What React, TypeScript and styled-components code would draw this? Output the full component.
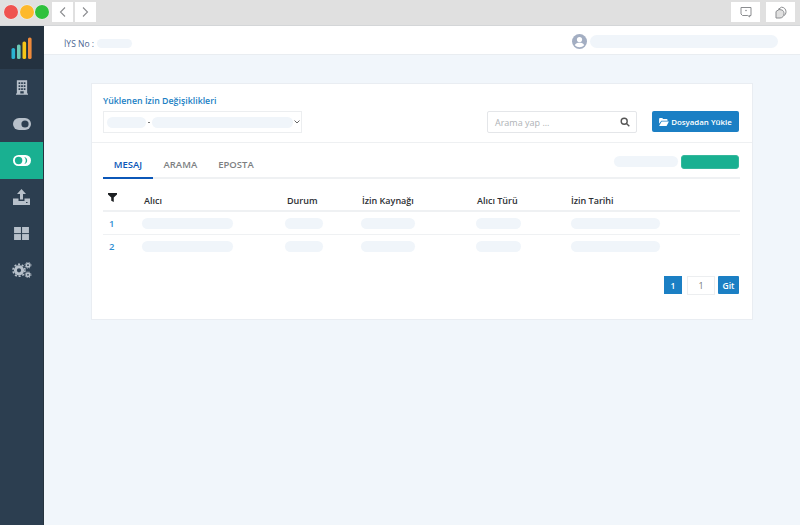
import React from "react";
import styled, { createGlobalStyle } from "styled-components";

const Global = createGlobalStyle`
  html, body { margin: 0; padding: 0; height: 100%; }
  body { font-family: "Open Sans", "Noto Sans", sans-serif; background: #f1f6fb; overflow: hidden; }
  #root { height: 100%; }
  * { box-sizing: border-box; }
`;

const Page = styled.div`
  width: 800px; height: 525px; display: flex; flex-direction: column; overflow: hidden;
`;
const Chrome = styled.div`
  height: 26px; flex: none; background: #e0e0e0; display: flex; align-items: center;
  padding: 0 4px 1px 4px; border-bottom: 1px solid #d4d6d8;
`;
const Dots = styled.div`
  display: flex; gap: 1.6px;
`;
const Dot = styled.span<{ $c: string }>`
  width: 14px; height: 14px; border-radius: 50%; background: ${p => p.$c};
  flex: none; box-shadow: 0 0 0 0.5px rgba(255,255,255,.6);
`;
const NavGroup = styled.div`
  display: flex; gap: 2px; margin-left: 3px;
`;
const ChromeBtn = styled.div<{ $w?: number }>`
  width: ${p => p.$w ?? 21}px; height: 20px; background: #fff; display: flex; align-items: center; justify-content: center;
`;
const ChromeRight = styled.div`
  margin-left: auto; display: flex; gap: 6px; margin-right: 1px;
`;
const Body = styled.div`
  flex: 1; display: flex; min-height: 0;
`;
const Sidebar = styled.nav`
  width: 44px; flex: none; background: #2c3e50; display: flex; flex-direction: column;
  border-right: 1px solid #26343f;
`;
const LogoCell = styled.div`
  height: 43px; background: #243240; display: flex; align-items: center; justify-content: center;
`;
const SideItem = styled.div<{ $active?: boolean }>`
  height: 36.5px; display: flex; align-items: center; justify-content: center;
  background: ${p => (p.$active ? "#19b091" : "transparent")};
`;
const Main = styled.div`
  flex: 1; display: flex; flex-direction: column; min-width: 0;
`;
const Header = styled.header`
  height: 29px; flex: none; background: #fff; border-bottom: 1px solid #e9edf1;
  display: flex; align-items: center; padding: 2px 22px 0 20px;
`;
const IysGroup = styled.div`
  display: flex; align-items: center; margin-top: 5px;
`;
const IysLabel = styled.span`
  font-size: 8.5px; font-weight: 500; color: #4a6491; margin-right: 3px;
`;
const Pill = styled.span<{ $w: number; $h?: number }>`
  display: block; flex: none; width: ${p => p.$w}px; height: ${p => p.$h ?? 11}px;
  border-radius: 7px; background: #f0f5fa;
`;
const UserBox = styled.div`
  margin-left: auto; display: flex; align-items: center; gap: 3px;
`;
const Content = styled.main`
  flex: 1; padding: 28px 47px 0 47px;
`;
const Card = styled.section`
  height: 237px; background: #fff; border: 1px solid #e9edf2; padding: 0;
`;
const CardHead = styled.div`
  height: 59px; border-bottom: 1px solid #eef0f2; display: flex; align-items: flex-end;
  padding: 0 13px 9px 11px;
`;
const HeadLeft = styled.div`
  display: flex; flex-direction: column; gap: 3px;
`;
const Title = styled.div`
  font-size: 8.8px; font-weight: 600; color: #1b7fc4; line-height: 13px;
`;
const SelectBox = styled.div`
  width: 199px; height: 22px; border: 1px solid #eceef0; display: flex; align-items: center;
  padding: 0 0 0 3px; background: #fff;
`;
const Sep = styled.span`
  width: 2px; height: 1px; background: #777; margin: 0 2px; flex: none;
`;
const SearchBox = styled.div`
  width: 150px; height: 22px; margin-left: auto; border: 1px solid #e4e6e9; border-radius: 2px;
  display: flex; align-items: center; justify-content: space-between; padding: 0 6px 0 7px;
  font-size: 9px; color: #aeb2b6;
`;
const UploadBtn = styled.button`
  width: 87px; height: 21px; margin-left: 15px; margin-bottom: 1px; border: none; border-radius: 2px; background: #1b7fc4;
  color: #fff; font: 600 7.9px "Open Sans", sans-serif; display: flex; align-items: center; justify-content: center; gap: 2px; padding: 0;
`;
const TabsRow = styled.div`
  margin: 12px 12px 0 11px; height: 24px; display: flex; align-items: flex-start; border-bottom: 2px solid #eff1f3;
`;
const Tab = styled.div<{ $active?: boolean }>`
  height: 24px; width: ${p => (p.$active ? 50 : undefined)}px; padding: ${p => (p.$active ? "0" : "0 10.5px")};
  text-align: center; font-size: 9.5px; font-weight: 600; line-height: 20px;
  color: ${p => (p.$active ? "#0b57b8" : "#7d7f82")};
  border-bottom: ${p => (p.$active ? "2px solid #0b57b8" : "none")};
`;
const TabActions = styled.div`
  margin-left: auto; margin-right: 1px; display: flex; gap: 3px; align-items: center; height: 15px;
  transform: translateY(-1px);
`;
const GreenBar = styled.span`
  width: 58px; height: 14px; border-radius: 3px; background: #19b091; border: 1px solid #35b89c;
`;
const Table = styled.div`
  margin: 9px 12px 0 11px;
`;
const Row = styled.div<{ $head?: boolean }>`
  display: grid; grid-template-columns: 39px 143px 76px 115px 95px 1fr; align-items: center;
  height: ${p => (p.$head ? 24 : 23)}px;
  border-bottom: ${p => (p.$head ? "2px solid #eff1f3" : "1px solid #eff1f3")};
`;
const LastRow = styled(Row)`
  border-bottom: none;
`;
const HeadCell = styled.div<{ $pl?: number }>`
  font-size: 9px; font-weight: 600; color: #2c2f33; padding-left: ${p => p.$pl ?? 1}px; padding-top: 2px;
`;
const FilterCell = styled.div`
  padding-left: 5px; margin-top: -4px; display: flex;
`;
const IndexCell = styled.div`
  font-size: 9.5px; font-weight: 600; color: #2f8fd3; padding-left: 6px;
`;
const Pager = styled.div`
  margin: 18px 1px 0 0; padding-right: 12px; display: flex; justify-content: flex-end; align-items: flex-start; gap: 5px;
`;
const PageNum = styled.div`
  width: 18px; height: 18px; background: #1b7fc4; color: #fff; font-size: 8.5px; font-weight: 600;
  display: flex; align-items: center; justify-content: center;
`;
const PageInput = styled.div`
  width: 28px; height: 19px; border: 1px solid #eceef0; color: #777; font-size: 9px;
  display: flex; align-items: center; justify-content: center;
`;
const GoBtn = styled.div`
  width: 21px; height: 18px; background: #1b7fc4; color: #fff; font-size: 8.5px; font-weight: 600; border-radius: 1px;
  display: flex; align-items: center; justify-content: center; margin-left: -2px;
`;

const Chevron = ({ d }: { d: string }) => (
  <svg width="9" height="12" viewBox="0 0 9 12" fill="none" stroke="#8b8d90" strokeWidth="1.1"><path d={d} /></svg>
);
const FeedbackIcon = () => (
  <svg width="12" height="12" viewBox="0 0 12 12" fill="none" stroke="#8b8d90" strokeWidth="1">
    <path d="M1 1.5h10v8H9.5l.3 1.5-2-1.5H2.5L1 8z" />
    <circle cx="6" cy="4.5" r="0.8" fill="#8b8d90" stroke="none" />
  </svg>
);
const PagesIcon = () => (
  <svg width="12" height="13" viewBox="0 0 12 13" fill="none" stroke="#8b8d90" strokeWidth="1">
    <path d="M3 3.5 6.5 1.2c2.6 0 4.5 2 4.5 4.6 0 1.6-.8 3-2 3.9" />
    <path d="M1 5.5 4 3.5l3 .5c1.5.6 2 2.2 2 3.6C9 10 7.5 12 5 12H1z" fill="#e0e0e0" />
  </svg>
);
const Logo = () => (
  <svg width="21" height="22" viewBox="0 0 21 22">
    <rect x="0.5" y="11" width="3.6" height="11" rx="1.6" fill="#2bb3d2" />
    <rect x="6" y="7.5" width="3.6" height="14.5" rx="1.6" fill="#6cc9b6" />
    <rect x="11.5" y="4.5" width="3.6" height="17.5" rx="1.6" fill="#f5c518" />
    <rect x="17" y="0.5" width="3.6" height="21.5" rx="1.6" fill="#ef8a3a" />
  </svg>
);
const ICON = "#b7c0ca";
const Building = () => (
  <svg width="12" height="15" viewBox="0 0 14 17" fill={ICON}>
    <path fillRule="evenodd" d="M1 0h12v15.5h1V17H0v-1.5h1zM3 2.5v2h2v-2zm3 0v2h2v-2zm3 0v2h2v-2zM3 6v2h2V6zm3 0v2h2V6zm3 0v2h2V6zM3 9.5v2h2v-2zm3 0v2h2v-2zm3 0v2h2v-2zM5 13v2.5h4V13z" />
  </svg>
);
const ToggleOn = () => (
  <svg width="18" height="12" viewBox="0 0 18 12">
    <rect width="18" height="12" rx="6" fill={ICON} />
    <circle cx="12" cy="6" r="3.6" fill="#2c3e50" />
  </svg>
);
const ToggleActive = () => (
  <svg width="18" height="11" viewBox="0 0 18 11">
    <rect width="18" height="11" rx="5.5" fill="#fff" />
    <circle cx="5.6" cy="5.5" r="3.7" fill="#19b091" />
    <path d="M11.3 1.9a3.7 3.7 0 0 1 0 7.2 5.6 5.6 0 0 0 0-7.2z" fill="#19b091" />
  </svg>
);
const Upload = () => (
  <svg width="17" height="16" viewBox="0 0 17 16" fill={ICON}>
    <path d="M8.5 0 13 5h-3v5.5H7V5H4z" />
    <path fillRule="evenodd" d="M0 9.5h5.5v2.5h6V9.5H17V16H0zM13 13v1h1.5v-1z" />
  </svg>
);
const Grid = () => (
  <svg width="15" height="13" viewBox="0 0 16 14" fill={ICON}>
    <rect width="7.4" height="6.6" /><rect x="8.6" width="7.4" height="6.6" />
    <rect y="7.6" width="7.4" height="6.4" /><rect x="8.6" y="7.6" width="7.4" height="6.4" />
  </svg>
);
const Gears = () => (
  <svg width="20" height="16" viewBox="0 0 20 16" fill="none" stroke={ICON}>
    <circle cx="7" cy="8.3" r="3.6" strokeWidth="3" />
    <circle cx="7" cy="8.3" r="6" strokeWidth="1.6" strokeDasharray="2 1.8" />
    <circle cx="16" cy="3.2" r="1.7" strokeWidth="1.6" />
    <circle cx="16" cy="12.8" r="1.7" strokeWidth="1.6" />
    <circle cx="16" cy="3.2" r="3" strokeWidth="0.9" strokeDasharray="1.2 1.2" />
    <circle cx="16" cy="12.8" r="3" strokeWidth="0.9" strokeDasharray="1.2 1.2" />
  </svg>
);
const Avatar = () => (
  <svg width="15" height="15" viewBox="0 0 15 15">
    <circle cx="7.5" cy="7.5" r="7.5" fill="#a3aec2" />
    <circle cx="7.5" cy="5.6" r="2.6" fill="#fff" />
    <path d="M2.8 11.2c.8-1.8 2.6-2.4 4.7-2.4s3.9.6 4.7 2.4a6.2 6.2 0 0 1-9.4 0z" fill="#fff" />
  </svg>
);
const CaretSvg = styled.svg`
  flex: none;
`;
const Caret = () => (
  <CaretSvg width="8" height="6" viewBox="0 0 8 6" fill="none" stroke="#666" strokeWidth="1"><path d="M1.5 1.5 4 4 6.5 1.5" /></CaretSvg>
);
const SearchIcon = () => (
  <svg width="10" height="10" viewBox="0 0 10 10" fill="none" stroke="#555" strokeWidth="1.4">
    <circle cx="4.2" cy="4.2" r="3" /><path d="M6.5 6.5 9.3 9.3" />
  </svg>
);
const Folder = () => (
  <svg width="10" height="8" viewBox="0 0 11 9" fill="#fff">
    <path d="M0 1a1 1 0 0 1 1-1h2.5l1 1.2H8.5a1 1 0 0 1 1 1V3H2.5L0 6.5z" />
    <path d="M2.8 3.8H11L8.4 9H0z" />
  </svg>
);
const Funnel = () => (
  <svg width="9" height="9" viewBox="0 0 10 10" fill="#1c1f22"><path d="M0 0h10v1.6L6.4 5v5L3.6 8.6V5L0 1.6z" /></svg>
);

const columns = [
  { label: "Alıcı", pl: 2, w: 91 },
  { label: "Durum", pl: 2, w: 38 },
  { label: "İzin Kaynağı", pl: 1, w: 54 },
  { label: "Alıcı Türü", pl: 1, w: 45 },
  { label: "İzin Tarihi", pl: 0, w: 89 },
];

export default function App() {
  return (
    <Page>
      <Global />
      <Chrome>
        <Dots>
          <Dot $c="#ef5350" />
          <Dot $c="#fdb92c" />
          <Dot $c="#2ec13d" />
        </Dots>
        <NavGroup>
          <ChromeBtn><Chevron d="M7 1.5 2.5 6 7 10.5" /></ChromeBtn>
          <ChromeBtn><Chevron d="M2 1.5 6.5 6 2 10.5" /></ChromeBtn>
        </NavGroup>
        <ChromeRight>
          <ChromeBtn $w={29}><FeedbackIcon /></ChromeBtn>
          <ChromeBtn $w={29}><PagesIcon /></ChromeBtn>
        </ChromeRight>
      </Chrome>
      <Body>
        <Sidebar>
          <LogoCell><Logo /></LogoCell>
          <SideItem><Building /></SideItem>
          <SideItem><ToggleOn /></SideItem>
          <SideItem $active><ToggleActive /></SideItem>
          <SideItem><Upload /></SideItem>
          <SideItem><Grid /></SideItem>
          <SideItem><Gears /></SideItem>
        </Sidebar>
        <Main>
          <Header>
            <IysGroup>
              <IysLabel>İYS No :</IysLabel>
              <Pill $w={35} $h={9} />
            </IysGroup>
            <UserBox>
              <Avatar />
              <Pill $w={188} $h={13} />
            </UserBox>
          </Header>
          <Content>
            <Card>
              <CardHead>
                <HeadLeft>
                  <Title>Yüklenen İzin Değişiklikleri</Title>
                  <SelectBox>
                    <Pill $w={39} />
                    <Sep />
                    <Pill $w={141} />
                    <Caret />
                  </SelectBox>
                </HeadLeft>
                <SearchBox>
                  Arama yap ...
                  <SearchIcon />
                </SearchBox>
                <UploadBtn><Folder />Dosyadan Yükle</UploadBtn>
              </CardHead>
              <TabsRow>
                <Tab $active>MESAJ</Tab>
                <Tab>ARAMA</Tab>
                <Tab>EPOSTA</Tab>
                <TabActions>
                  <Pill $w={64} />
                  <GreenBar />
                </TabActions>
              </TabsRow>
              <Table>
                <Row $head>
                  <FilterCell><Funnel /></FilterCell>
                  {columns.map(c => <HeadCell key={c.label} $pl={c.pl}>{c.label}</HeadCell>)}
                </Row>
                <Row>
                  <IndexCell>1</IndexCell>
                  {columns.map(c => <Pill key={c.label} $w={c.w} />)}
                </Row>
                <LastRow>
                  <IndexCell>2</IndexCell>
                  {columns.map(c => <Pill key={c.label} $w={c.w} />)}
                </LastRow>
              </Table>
              <Pager>
                <PageNum>1</PageNum>
                <PageInput>1</PageInput>
                <GoBtn>Git</GoBtn>
              </Pager>
            </Card>
          </Content>
        </Main>
      </Body>
    </Page>
  );
}
